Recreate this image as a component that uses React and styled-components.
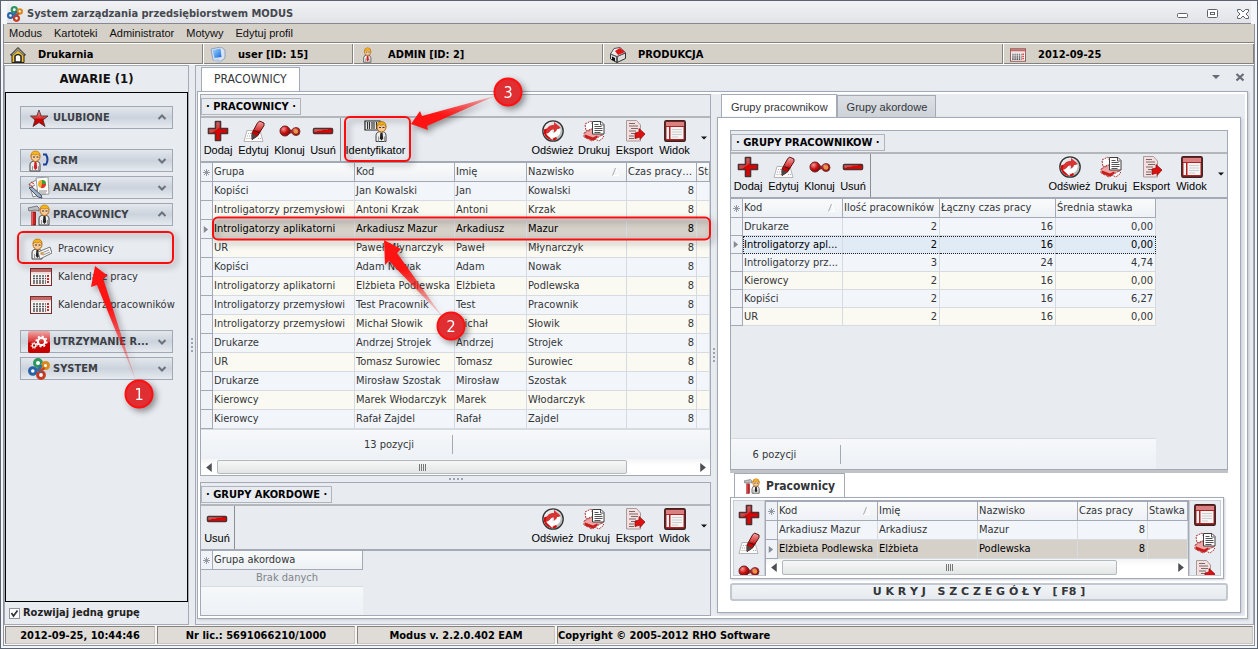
import React from 'react';
import styled, { createGlobalStyle, css } from 'styled-components';

const Colors = {
  frame: '#5c6472',
  line: '#a3aab6',
  soft: '#d6dae1',
  panel: '#e8ebf0',
  beige: '#d5d0c8',
  text: '#333539',
  white: '#ffffff',
};

const ui = `'DejaVu Sans Condensed', 'Open Sans', sans-serif`;
const sans = `'Liberation Sans', Arial, sans-serif`;

const GlobalStyle = createGlobalStyle`
  * {
    box-sizing: border-box;
  }

  body {
    margin: 0;
    background: ${Colors.panel};
    color: ${Colors.text};
    font: 11px/14px ${ui};
  }

  button {
    margin: 0;
    padding: 0;
    border: 0;
    background: none;
    color: inherit;
    font: inherit;
  }

  svg {
    display: block;
    flex: none;
  }
`;

const Window = styled.div`
  position: relative;
  display: flex;
  flex-direction: column;
  min-height: 100vh;
  border: 1px solid ${Colors.frame};
  background: #f4f6f9;
`;

const TitleBar = styled.header`
  display: flex;
  align-items: center;
  gap: 4px;
  height: 23px;
  margin: 0 6px;
  padding-top: 3px;
  border-bottom: 1px solid #85888f;
  background: linear-gradient(#f1f2f5, #e1e3e8);

  h1 {
    flex: 1;
    margin: 0;
    font-size: 11px;
    font-weight: bold;
    color: #45484d;
  }
`;

const WindowButton = styled.button`
  width: 16px;
  height: 16px;
  margin-left: 10px;
`;

const Frame = styled.div`
  flex: 1;
  display: flex;
  flex-direction: column;
  margin: 0 2px 2px;
  border: 1px solid #8b919c;
  border-top: 0;
`;

const MenuBar = styled.nav`
  display: flex;
  gap: 12px;
  height: 19px;
  padding: 2px 5px;
  border-bottom: 1px solid #85827d;
  background: ${Colors.beige};
  font-family: ${sans};

  a {
    color: #111;
    text-decoration: none;
  }
`;

const InfoBar = styled.div`
  display: flex;
  gap: 1px;
  padding: 1px 0;
  background: ${Colors.white};
`;

const InfoCell = styled.div`
  display: flex;
  align-items: center;
  flex: ${(p) => (p.$width ? 'none' : 1)};
  gap: 12px;
  width: ${(p) => p.$width}px;
  height: 20px;
  padding: 2px 0 0 6px;
  border: 1px solid #85827d;
  border-top: 0;
  border-left: 0;
  background: ${Colors.beige};
  color: #000;
  font-weight: bold;
`;

const Main = styled.main`
  flex: 1;
  display: flex;
`;

const Sidebar = styled.aside`
  flex: none;
  display: flex;
  flex-direction: column;
  width: 185px;
  border: 1px solid ${Colors.line};
  background: ${Colors.panel};
`;

const SidebarTitle = styled.h2`
  margin: 0;
  font-size: 13px;
  line-height: 26px;
  text-align: center;
  color: #111;
`;

const GroupList = styled.div`
  flex: 1;
  display: flex;
  flex-direction: column;
  gap: 4px;
  padding: 13px 14px;
  border: 1px solid #000;
`;

const GroupButton = styled.button`
  display: flex;
  align-items: center;
  gap: 3px;
  width: 100%;
  height: 23px;
  margin-bottom: ${(p) => (p.$spaced ? 16 : 0)}px;
  padding: 0 5px 0 7px;
  border: 1px solid #a0a8b4;
  background: linear-gradient(#e3e7ed, #ccd3dc 50%, #e6eaf0);
  color: #3c3f45;
  font-weight: bold;
  text-align: left;

  span {
    flex: 1;
  }
`;

const SubList = styled.div`
  display: flex;
  flex-direction: column;
  padding: 5px 0 7px 10px;
`;

const SubItem = styled.a`
  display: flex;
  align-items: center;
  gap: 6px;
  height: 28px;
  color: ${Colors.text};
  text-decoration: none;
  white-space: nowrap;
`;

const ExpandOption = styled.label`
  display: flex;
  align-items: center;
  gap: 3px;
  height: 22px;
  padding-left: 4px;
  color: #222;
  font-weight: bold;
`;

const CheckWrap = styled.span`
  display: grid;

  > * {
    grid-area: 1 / 1;
  }

  svg {
    pointer-events: none;
  }
`;

const Checkbox = styled.input`
  appearance: none;
  width: 11px;
  height: 11px;
  margin: 0;
  border: 1px solid #8f96a1;
  background: ${Colors.white};
`;

const Splitter = styled.div`
  flex: none;
  display: flex;
  flex-direction: ${(p) => (p.$vertical ? 'column' : 'row')};
  align-items: center;
  justify-content: center;
  gap: 2px;
  width: ${(p) => (p.$vertical ? '6px' : 'auto')};
  height: ${(p) => (p.$vertical ? 'auto' : '6px')};
  background: ${Colors.panel};

  i {
    width: 2px;
    height: 2px;
    background: #9da4b1;
  }
`;

const Workspace = styled.section`
  flex: 1;
  display: flex;
  flex-direction: column;
  min-width: 0;
  padding: 1px 5px 5px 1px;
  border: 1px solid ${Colors.line};
  background: ${Colors.panel};
`;

const DocTabs = styled.div`
  display: flex;
  align-items: flex-end;
  height: 24px;
  padding-left: 4px;
`;

const DocTab = styled.button`
  height: 25px;
  margin-bottom: -1px;
  padding: 0 12px 2px;
  border: 1px solid ${Colors.line};
  border-bottom: 0;
  background: ${Colors.white};
  font-size: 12px;
`;

const DocActions = styled.div`
  flex: 1;
  display: flex;
  align-self: center;
  justify-content: flex-end;
  gap: 14px;
  padding: 0 3px 5px 0;
`;

const Dock = styled.div`
  flex: 1;
  display: flex;
  padding: 2px;
  border: 1px solid ${Colors.line};
  background: ${Colors.panel};
  box-shadow: inset 0 0 0 2px ${Colors.white}, 1px 1px 2px #c3c8d1;
`;

const LeftColumn = styled.div`
  flex: none;
  display: flex;
  flex-direction: column;
  width: 511px;
`;

const RightColumn = styled.div`
  flex: 1;
  display: flex;
  flex-direction: column;
  min-width: 0;
  padding: 0 4px 3px 0;
`;

const Panel = styled.section`
  flex: ${(p) => (p.$grow ? 1 : 'none')};
  display: flex;
  flex-direction: column;
  border: 1px solid ${Colors.line};
  background: ${Colors.panel};
`;

const PanelHeader = styled.div`
  display: flex;
  align-items: flex-start;
  height: 23px;
  padding-top: 3px;
  border-bottom: 2px solid #b3b6bb;

  h3 {
    margin: 0;
    padding: 1px 4px 0;
    border: 1px solid #b0b4bb;
    color: #000;
    font-size: 11px;
    line-height: 14px;
  }
`;

const ToolbarBox = styled.div`
  display: flex;
  height: 45px;
  padding-right: 1px;
  border-bottom: 2px solid ${Colors.line};
`;

const ToolGroup = styled.div`
  display: flex;
  padding-right: ${(p) => (p.$first ? 1 : 0)}px;
  border-right: ${(p) => (p.$first ? '1px solid #8a8e96' : '0')};
  margin-left: ${(p) => (p.$end ? 'auto' : 0)};
`;

const ToolButton = styled.button`
  display: flex;
  flex-direction: column;
  align-items: center;
  gap: 1px;
  width: ${(p) => p.$width}px;
  padding-top: 2px;
  color: #000;
  font: 11px/14px ${sans};
  white-space: nowrap;
`;

const MoreButton = styled.button`
  width: 15px;
  padding: 0 2px 4px 7px;
`;

const Table = styled.table`
  flex: none;
  width: ${(p) => (p.$width ? `${p.$width}px` : '100%')};
  border-collapse: separate;
  border-spacing: 0;
  table-layout: fixed;

  th,
  td {
    overflow: hidden;
    padding: 0 2px 0 1px;
    white-space: nowrap;
    text-overflow: ellipsis;
  }

  th {
    height: 19px;
    padding-right: 0;
    border: solid ${Colors.line};
    border-width: 0 1px 1px 0;
    background: linear-gradient(#f9fafb, #eef1f5);
    font-weight: normal;
    text-align: left;
    text-overflow: clip;
  }

  td {
    height: ${(p) => p.$row}px;
    border: solid ${Colors.soft};
    border-width: 0 1px 1px 0;
  }

  td:first-child,
  th:first-child {
    padding: 0 1px;
    border-right: 1px solid ${Colors.line};
    background: #eff2f7;
  }

  td:first-child {
    border-bottom-color: ${Colors.line};
  }
`;

const Row = styled.tr`
  background: ${(p) => (p.$alt ? '#fbfaf2' : '#f2f5fa')};

  ${(p) =>
    p.$state === 'selected' &&
    css`
      background: ${Colors.beige};
      color: #000;
    `}

  ${(p) =>
    p.$state === 'focused' &&
    css`
      background: #e1ebf6;
      color: #000;

      && td:not(:first-child) {
        border-top: 1px dotted #222;
        border-bottom: 1px dotted #222;
      }

      && td:nth-child(2) {
        border-left: 1px dotted #222;
        padding-left: 0;
      }

      && td:last-child {
        border-right: 1px dotted #222;
      }
    `}
`;

const Cell = styled.td`
  text-align: ${(p) => (p.$number ? 'right' : 'left')};
`;

const HeadLabel = styled.span`
  display: flex;
  align-items: center;
  justify-content: space-between;
  padding-right: 7px;
`;

const GridFooter = styled.div`
  display: flex;
  align-items: center;
  flex: ${(p) => (p.$grow ? 1 : 'none')};
  width: ${(p) => (p.$width ? `${p.$width}px` : 'auto')};
  height: ${(p) => (p.$label ? 31 : 29)}px;
  border-top: 1px solid ${Colors.soft};
  background: linear-gradient(#f6f8fa, #edf1f5);

  span {
    width: ${(p) => p.$label}px;
    padding-right: ${(p) => p.$pad}px;
    border-right: 1px solid ${Colors.line};
    line-height: 19px;
    text-align: ${(p) => (p.$pad > 30 ? 'right' : 'center')};
  }
`;

const EmptyRow = styled.div`
  width: 162px;
  line-height: 16px;
  padding-left: 10px;
  color: #80848a;
  text-align: center;
`;

const Filler = styled.div`
  flex: 1;
`;

const ScrollTrack = styled.div`
  display: flex;
  height: ${(p) => p.$height}px;
  background: linear-gradient(#f3f4f5, #fff 40%);
`;

const ScrollArrow = styled.button`
  display: grid;
  place-items: center;
  width: 16px;
`;

const ScrollArea = styled.div`
  flex: 1;
  display: flex;
`;

const ScrollThumb = styled.div`
  display: flex;
  align-items: center;
  justify-content: center;
  gap: 1px;
  width: ${(p) => p.$size}%;
  margin: 1px 0;
  border: 1px solid #b3b8bd;
  border-radius: 2px;
  background: linear-gradient(#f6f7f7, #e3e6e6);

  i {
    width: 1px;
    height: 7px;
    background: #777;
  }
`;

const SideTabs = styled.div`
  display: flex;
  align-items: flex-end;
  height: 23px;
  padding-left: 4px;
`;

const SideTab = styled.button`
  height: ${(p) => (p.$active ? 24 : 22)}px;
  margin-bottom: ${(p) => (p.$active ? -1 : 0)}px;
  padding: 0 8px 0 9px;
  border: 1px solid ${Colors.line};
  border-bottom: 0;
  background: ${(p) =>
    p.$active ? Colors.white : 'linear-gradient(#dde1e6, #cdd2d8)'};
  font-family: ${sans};
`;

const TabPanel = styled.div`
  flex: 1;
  display: flex;
  flex-direction: column;
  padding: 12px 12px 11px;
  border: 1px solid ${Colors.line};
  background: ${Colors.white};
  box-shadow: 1px 1px 3px #c6cbd3;
`;

const DetailTabs = styled.div`
  display: flex;
  height: 27px;
  padding-left: 4px;
  border-top: 3px solid #c2c3c5;
`;

const DetailTab = styled.button`
  display: flex;
  align-items: center;
  gap: 6px;
  height: 25px;
  padding: 0 9px;
  border: 1px solid ${Colors.line};
  border-bottom: 0;
  background: ${Colors.white};
  font-size: 12px;
  font-weight: bold;
`;

const Detail = styled.div`
  display: flex;
  height: 82px;
  margin-right: 4px;
  padding: 2px;
  border: 1px solid ${Colors.line};
  box-shadow: 1px 1px 2px #cdd1d8;
`;

const IconStrip = styled.div`
  flex: none;
  display: flex;
  flex-direction: column;
  align-items: center;
  gap: 6px;
  width: 32px;
  padding-top: 3px;
  overflow: hidden;
  border: 1px solid #c9cdd5;
  background: ${Colors.panel};
`;

const DetailGrid = styled.div`
  flex: 1;
  min-width: 0;
  border: 1px solid ${Colors.line};
  border-top-width: 2px;
`;

const HideButton = styled.button`
  height: 18px;
  margin-top: 4px;
  border: 2px solid #c3c8d0;
  border-radius: 3px;
  background: linear-gradient(#f1f4f7, #e6eaee);
  font-family: 'DejaVu Sans', sans-serif;
  font-weight: bold;
  line-height: 14px;
  white-space: pre;
`;

const StatusBar = styled.footer`
  display: flex;
  gap: 2px;
  padding: 1px;
  background: #f7f6f4;
`;

const StatusCell = styled.div`
  flex: ${(p) => (p.$width ? 'none' : 1)};
  width: ${(p) => p.$width}px;
  height: 18px;
  padding-top: 2px;
  border: 1px solid #85827d;
  border-right-color: #c9c6c1;
  border-bottom-color: #c9c6c1;
  background: #dfdcd8;
  color: #000;
  font-weight: bold;
  text-align: ${(p) => (p.$width ? 'center' : 'left')};
`;

const Annotations = styled.svg`
  position: absolute;
  top: -1px;
  left: -1px;
  pointer-events: none;
  font: 16px ${ui};
`;

const Icon = ({ size = 22, box = 22, children }) => (
  <svg width={size} height={size} viewBox={`0 0 ${box} ${box}`} aria-hidden="true">
    {children}
  </svg>
);

const Gradients = () => (
  <svg width="0" height="0" style={{ position: 'absolute' }} aria-hidden="true">
    <defs>
      <linearGradient id="red" x1="0" y1="0" x2="0.7" y2="1">
        <stop offset="0" stopColor="#b99494" />
        <stop offset="0.48" stopColor="#d43a3a" />
        <stop offset="0.5" stopColor="#d90000" />
        <stop offset="1" stopColor="#e40808" />
      </linearGradient>
      <linearGradient id="redDown" x1="0" y1="0" x2="0" y2="1">
        <stop offset="0" stopColor="#efaaaa" />
        <stop offset="0.5" stopColor="#d83030" />
        <stop offset="0.55" stopColor="#c80000" />
        <stop offset="1" stopColor="#c60000" />
      </linearGradient>
      <radialGradient id="ball" cx="0.35" cy="0.3" r="0.8">
        <stop offset="0" stopColor="#f29a9a" />
        <stop offset="0.5" stopColor="#cf1212" />
        <stop offset="1" stopColor="#5d0808" />
      </radialGradient>
      <linearGradient id="silver" x1="0" y1="0" x2="1" y2="1">
        <stop offset="0" stopColor="#fff" />
        <stop offset="1" stopColor="#a9a9a9" />
      </linearGradient>
      <linearGradient id="screen" x1="0" y1="0" x2="1" y2="1">
        <stop offset="0" stopColor="#9fdcff" />
        <stop offset="1" stopColor="#1766df" />
      </linearGradient>
      <linearGradient id="tail1" x1="0" y1="0" x2="0.3" y2="1">
        <stop offset="0.45" stopColor="#ff1414" />
        <stop offset="1" stopColor="#ff1414" stopOpacity="0.25" />
      </linearGradient>
      <linearGradient id="tail3" x1="0" y1="1" x2="1" y2="0">
        <stop offset="0.4" stopColor="#ff1414" />
        <stop offset="1" stopColor="#ff1414" stopOpacity="0.25" />
      </linearGradient>
    </defs>
  </svg>
);

const PlusIcon = () => (
  <Icon>
    <path d="M8.500 1.500h5v7h7v5h-7v7h-5v-7h-7v-5h7z" fill="url(#red)" stroke="#4e3030" strokeWidth="1.600" strokeLinejoin="round" />
  </Icon>
);

const MinusIcon = () => (
  <Icon>
    <rect x="1.500" y="8.500" width="19" height="5" rx="1" fill="url(#red)" stroke="#4e3030" strokeWidth="1.500" />
  </Icon>
);

const PencilIcon = () => (
  <Icon>
    <path d="M4 10.500h13L20 21.500H1z" fill="#fdfdfd" stroke="#b5b5b5" />
    <path d="M5 13.500h5M4 16h5M3.500 18.500h5M15 18.500h3" stroke="#aaa" strokeDasharray="1 1" />
    <path d="M9 13l5.500-10 2-2L21 3v2.500L14.500 16 9 19.500z" fill="url(#redDown)" stroke="#5a1111" />
    <path d="M9 13.500l5.500 2.500L9 20z" fill="#484848" />
    <path d="M11.500 10.500l5 2.500" stroke="#222" />
  </Icon>
);

const CloneIcon = () => (
  <Icon>
    <path d="M9 9l5 1v3l-5 1z" fill="#a22020" />
    <circle cx="6" cy="11" r="5" fill="url(#ball)" stroke="#6d2020" />
    <circle cx="17" cy="11.500" r="4" fill="url(#ball)" stroke="#80393b" />
    <circle cx="17" cy="11.500" r="2.300" fill="#de9a45" />
  </Icon>
);

const RefreshIcon = () => (
  <Icon>
    <circle cx="11" cy="11" r="10.200" fill="url(#silver)" stroke="#333" strokeWidth="1.300" />
    <path d="M1.800 9.500a9.300 9.300 0 0 0 13.200 9.800l-1-2.800-4 3-6-6 2.500-2.500V8z" fill="#d10c0c" />
    <path d="M4 13.500c0-6 3-8.500 8-8.500V2l6.500 5.500L12 12.500V9.500c-3 0-4 1.500-4 4z" fill="#d93434" />
    <path d="M18.500 9c.5 6-3 8.500-8 8.500V20l-6-5.500 6-5V13c3 0 4.500-1.500 4.500-4z" fill="#fff" />
  </Icon>
);

const PrintIcon = () => (
  <Icon>
    <path d="M2 4l6-3 3 7-8 3z" fill="#fff" stroke="#a33" strokeDasharray="2 1" />
    <path d="M1 13l8-4 11 3v3l-11 6-8-4z" fill="#eda5a5" stroke="#b04545" strokeDasharray="3 1" />
    <path d="M2 14.500l8 3 4-2 1 2-5 3-8-3z" fill="#c71d1d" />
    <path d="M12 19l7-4 2 2-5 4z" fill="#fff" stroke="#b03434" strokeDasharray="2 1" />
    <path d="M9.500 1.500H18l3 3V14H9.500z" fill="#fff" stroke="#3e3e3e" />
    <path d="M11.500 4.500h4M11.500 6.500h7M11.500 8.500h8M11.500 10.500h8M11.500 12.500h6M17.500 2v3h3" stroke="#555" fill="none" />
  </Icon>
);

const ExportIcon = () => (
  <Icon>
    <path d="M2.500 0.500h10l4 4.500v16h-14z" fill="#f6dede" stroke="#a79c9c" />
    <path d="M5 3.500h6M5 6h9M7 8.500h7M5 11h7M7 13.500h6M5 16h5M5 18.500h5" stroke="#766a6a" />
    <path d="M11 13l4-1V8.500l6 5.500-5 5.500V17l-5 1.500z" fill="#de1010" stroke="#8d1818" strokeWidth="0.800" />
  </Icon>
);

const ViewIcon = () => (
  <Icon>
    <rect x="0.800" y="0.800" width="20.400" height="20.400" rx="1.500" fill="#b32222" stroke="#3b2020" strokeWidth="1.500" />
    <path d="M2 2h18v4H2z" fill="#d98080" />
    <path d="M2.500 7H5v12H2.500zM6.500 7h13v12h-13z" fill="#f5f5f5" />
    <path d="M8 9.500h10M8 12h10M8 14.500h10M8 17h6" stroke="#cdcdcd" />
  </Icon>
);

// Shared head and torso used by every worker icon.
const Figure = ({ x = 0, y = 0, apron }) => (
  <g transform={`translate(${x} ${y})`}>
    <path d="M1 20v-6q0-4 5-4t5 4v6z" fill="#ececec" stroke="#444" />
    <path d="M5.500 11h2l.7 6-1.700 2-1.700-2z" fill={apron || '#222'} />
    <path d="M3.500 20v-5M9.500 20v-5" stroke="#999" />
    <ellipse cx="6.500" cy="5.500" rx="4.500" ry="5" fill="#f7c995" stroke="#b46a12" />
    <path d="M2 5q0-5 4.500-5t4.500 5l-2-2-3 1-2-1z" fill="#f5b81b" stroke="#ba6d0c" strokeWidth="0.600" />
    <path d="M4 6h2M7.500 6h2" stroke="#333" />
  </g>
);

const BadgeIcon = () => (
  <svg width="24" height="22" viewBox="0 0 24 22" aria-hidden="true">
    <path d="M1 1h15v9H1z" fill="#fff" stroke="#222" strokeWidth="1.200" />
    <path d="M3.500 2v7M5.500 2v7M8 2v7M10 2v7M12.500 2v7" stroke="#333" strokeWidth="1.200" />
    <Figure x={11} y={1.500} />
  </svg>
);

const CrmIcon = () => (
  <Icon>
    <Figure x={1} y={1} apron="#c22" />
    <path d="M15 4.500h3q3 5 0 10h-3" fill="none" stroke="#1c3f98" strokeWidth="2" />
  </Icon>
);

const AnalysisIcon = () => (
  <Icon>
    <path d="M1 7l9-5 5 15-10 3z" fill="#f5f5f5" stroke="#888" />
    <path d="M8 1l12-1 1 17-11 1z" fill="#fff" stroke="#999" />
    <circle cx="14" cy="7" r="4" fill="#e9b12b" />
    <path d="M14 7V3a4 4 0 0 1 4 4z" fill="#3f9e3c" />
    <path d="M14 7h4a4 4 0 0 1-5 4z" fill="#d33" />
    <path d="M11 14h8M11 16h7M3 10l4-2M5 14l4-1" stroke="#888" />
    <path d="M1 11l9 9 4 1-1-3-9-8z" fill="#9fb0c8" stroke="#456" />
    <path d="M1 7l4 3M3 5l3 2" stroke="#c33" />
  </Icon>
);

const WorkersIcon = ({ size }) => (
  <Icon size={size}>
    <path d="M0 4l9-2 2 2v3L7 6 1 7z" fill="#bcc1c7" stroke="#666" strokeWidth="0.800" />
    <rect x="3.500" y="8" width="4" height="13" fill="#d12020" stroke="#771111" strokeWidth="0.800" />
    <path d="M4 7v14" stroke="#f39a9a" />
    <Figure x={10} y={1} />
  </Icon>
);

const WorkerDocIcon = () => (
  <Icon>
    <Figure x={1} y={1} />
    <path d="M8 14l12-5 2 6-12 6z" fill="#f6f6f6" stroke="#777" />
    <path d="M13 14.500l6-2.500M13 17l7-3" stroke="#999" />
    <circle cx="12" cy="15.500" r="1.700" fill="#d5a25c" />
  </Icon>
);

const CalendarIcon = ({ size }) => (
  <Icon size={size}>
    <rect x="0.500" y="2.500" width="21" height="17" fill="#f4f4f4" stroke="#7c2b2b" />
    <path d="M1 3h20v3H1z" fill="#c26a6a" />
    <path d="M1 7h20" stroke="#e9caca" />
    <path d="M3 10h13M3 12.500h13M3 15h13M3 17h13" stroke="#555" strokeDasharray="2 1" strokeWidth="1.500" />
    <path d="M18 9v9" stroke="#d22" strokeWidth="2" strokeDasharray="2 1" />
  </Icon>
);

const StarIcon = () => (
  <Icon>
    <path d="M11 3l2.200 6H20l-5 4 2 6.500-6-4-6 4L7 13 2.500 9h6.300z" fill="url(#redDown)" stroke="#5a3030" strokeWidth="0.900" />
  </Icon>
);

const GearIcon = () => (
  <Icon>
    <rect width="22" height="22" rx="2" fill="url(#redDown)" />
    <circle cx="13.500" cy="10.500" r="3.600" fill="none" stroke="#fff" strokeWidth="2.200" />
    <circle cx="13.500" cy="10.500" r="5.300" fill="none" stroke="#fff" strokeWidth="1.500" strokeDasharray="2 2.100" />
    <circle cx="6" cy="14.500" r="1.800" fill="none" stroke="#fff" strokeWidth="1.300" />
    <circle cx="6" cy="14.500" r="2.900" fill="none" stroke="#fff" strokeDasharray="1.300 1.300" />
  </Icon>
);

const LogoIcon = ({ size }) => (
  <Icon size={size}>
    <g fill="#fff" strokeWidth="3">
      <circle cx="4.800" cy="13" r="3.300" stroke="#2a62a8" />
      <circle cx="10" cy="5" r="3.500" stroke="#2c9560" />
      <circle cx="17.500" cy="7.500" r="3" stroke="#d98a1b" />
      <circle cx="13" cy="17" r="3.400" stroke="#c63b22" />
    </g>
    <path d="M8 12q4 0 5-5M9 11l5 3" stroke="#2f6fa5" strokeWidth="3" fill="none" />
    <path d="M11.500 13l5-3" stroke="#c5441f" strokeWidth="2.500" />
  </Icon>
);

const HomeIcon = () => (
  <Icon size={16} box={16}>
    <path d="M8 0.500L15.500 8H14v7.500H2V8H0.500z" fill="#f0c22c" stroke="#222" />
    <path d="M8 1l7 7h-2L8 3.500 3 8H1z" fill="#999" stroke="#333" strokeWidth="0.500" />
    <path d="M5 15V9q3-3 6 0v6z" fill="#fff" stroke="#222" strokeWidth="1.500" />
  </Icon>
);

const ComputerIcon = () => (
  <Icon size={16} box={16}>
    <path d="M1 2l10-2 4 3v8l-5 4-7-2z" fill="#d9e2ef" stroke="#90a2bb" />
    <path d="M2.500 3l8-1.500 1 8.500-7 1z" fill="url(#screen)" />
    <path d="M3 13l5-1 4 2-5 2z" fill="#b9c8dc" />
  </Icon>
);

const PersonIcon = () => (
  <Icon size={16} box={22}>
    <Figure x={4} y={1} apron="#c22" />
  </Icon>
);

const PlantIcon = () => (
  <Icon size={16} box={16}>
    <path d="M0.500 7L7 9.500v6L0.500 12zM7 9.500L15.500 6v5.500L7 15.500z" fill="#ddd" stroke="#333" />
    <path d="M0.500 7L4 1.500 10 .5l5.500 5L7 9.500z" fill="#eee" stroke="#555" />
    <path d="M5 4l5-3 5 4-7 3z" fill="#e01515" />
    <path d="M2 9.500l3 1.500v3.500L2 13z" fill="#111" />
  </Icon>
);

const Chevron = ({ up }) => (
  <Icon size={10} box={10}>
    <path d={up ? 'M1.500 6L5 2.500 8.500 6' : 'M1.500 3L5 6.500 8.500 3'} fill="none" stroke="#6b727e" strokeWidth="2" />
  </Icon>
);

const Triangle = ({ dir, size = 7, color = '#4b4e53' }) => {
  const points = {
    left: '6,0 6,8 1,4',
    right: '2,0 2,8 7,4',
    down: '0,2 8,2 4,6',
  };
  return (
    <svg width={size} height={size} viewBox="0 0 8 8" aria-hidden="true">
      <polygon points={points[dir]} fill={color} />
    </svg>
  );
};

const Asterisk = () => (
  <svg width="9" height="9" viewBox="0 0 9 9" aria-hidden="true">
    <path d="M4.500 1v7M1 4.500h7M2 2l5 5M7 2L2 7" stroke="#8a919c" strokeWidth="0.900" />
  </svg>
);

const SortMark = () => (
  <svg width="7" height="8" viewBox="0 0 7 8" aria-hidden="true">
    <path d="M3.500 0l3 7.500h-6" stroke="#fff" fill="none" />
    <path d="M3.500 0L0.500 7.500" stroke="#a7a9ad" fill="none" />
  </svg>
);

const Dots = ({ vertical }) => (
  <Splitter $vertical={vertical}>
    <i />
    <i />
    <i />
    <i />
  </Splitter>
);

const editTools = [
  { label: 'Dodaj', icon: <PlusIcon />, width: 34 },
  { label: 'Edytuj', icon: <PencilIcon />, width: 37 },
  { label: 'Klonuj', icon: <CloneIcon />, width: 35 },
  { label: 'Usuń', icon: <MinusIcon />, width: 32 },
];

const viewTools = [
  { label: 'Odśwież', icon: <RefreshIcon />, width: 43 },
  { label: 'Drukuj', icon: <PrintIcon />, width: 40 },
  { label: 'Eksport', icon: <ExportIcon />, width: 41 },
  { label: 'Widok', icon: <ViewIcon />, width: 39 },
];

const Tool = ({ label, icon, width }) => (
  <ToolButton $width={width}>
    {icon}
    {label}
  </ToolButton>
);

const Toolbar = ({ tools, extra }) => (
  <ToolbarBox>
    <ToolGroup $first>
      {tools.map((tool) => (
        <Tool key={tool.label} {...tool} />
      ))}
    </ToolGroup>
    {extra && (
      <ToolGroup>
        <Tool {...extra} />
      </ToolGroup>
    )}
    <ToolGroup $end>
      {viewTools.map((tool) => (
        <Tool key={tool.label} {...tool} />
      ))}
      <MoreButton aria-label="Więcej">
        <Triangle dir="down" size={6} color="#111" />
      </MoreButton>
    </ToolGroup>
  </ToolbarBox>
);

const Grid = ({ columns, rows, row, width }) => (
  <Table $row={row} $width={width}>
    <colgroup>
      <col width="12" />
      {columns.map((column) => (
        <col key={column.label} width={column.width} />
      ))}
    </colgroup>
    <thead>
      <tr>
        <th>
          <Asterisk />
        </th>
        {columns.map((column) => (
          <th key={column.label}>
            {column.sorted ? (
              <HeadLabel>
                {column.label}
                <SortMark />
              </HeadLabel>
            ) : (
              column.label
            )}
          </th>
        ))}
      </tr>
    </thead>
    <tbody>
      {rows.map(({ cells, state }, index) => (
        <Row key={index} $alt={index % 2 === 1} $state={state}>
          <td>{state && <Triangle dir="right" color="#858b96" />}</td>
          {columns.map((column, i) => (
            <Cell key={column.label} $number={column.number}>
              {cells[i]}
            </Cell>
          ))}
        </Row>
      ))}
    </tbody>
  </Table>
);

const ScrollBar = ({ size, height }) => (
  <ScrollTrack $height={height}>
    <ScrollArrow aria-label="W lewo">
      <Triangle dir="left" size={9} />
    </ScrollArrow>
    <ScrollArea>
      <ScrollThumb $size={size}>
        <i />
        <i />
        <i />
        <i />
      </ScrollThumb>
    </ScrollArea>
    <ScrollArrow aria-label="W prawo">
      <Triangle dir="right" size={9} />
    </ScrollArrow>
  </ScrollTrack>
);

const workerColumns = [
  { label: 'Grupa', width: 142 },
  { label: 'Kod', width: 100 },
  { label: 'Imię', width: 72 },
  { label: 'Nazwisko', width: 100, sorted: true },
  { label: 'Czas pracy…', width: 70, number: true },
  { label: 'Sta' },
];

const workers = [
  ['Kopiści', 'Jan', 'Kowalski'],
  ['Introligatorzy przemysłowi', 'Antoni', 'Krzak'],
  ['Introligatorzy aplikatorni', 'Arkadiusz', 'Mazur', 'selected'],
  ['UR', 'Paweł', 'Młynarczyk'],
  ['Kopiści', 'Adam', 'Nowak'],
  ['Introligatorzy aplikatorni', 'Elżbieta', 'Podlewska'],
  ['Introligatorzy przemysłowi', 'Test', 'Pracownik'],
  ['Introligatorzy przemysłowi', 'Michał', 'Słowik'],
  ['Drukarze', 'Andrzej', 'Strojek'],
  ['UR', 'Tomasz', 'Surowiec'],
  ['Drukarze', 'Mirosław', 'Szostak'],
  ['Kierowcy', 'Marek', 'Włodarczyk'],
  ['Kierowcy', 'Rafał', 'Zajdel'],
].map(([group, first, last, state]) => ({
  cells: [group, `${first} ${last}`, first, last, 8],
  state,
}));

const groupColumns = [
  { label: 'Kod', width: 100, sorted: true },
  { label: 'Ilość pracowników', width: 97, number: true },
  { label: 'Łączny czas pracy', width: 116, number: true },
  { label: 'Średnia stawka', width: 100, number: true },
];

const groups = [
  { cells: ['Drukarze', 2, 16, '0,00'] },
  { cells: ['Introligatorzy apl...', 2, 16, '0,00'], state: 'focused' },
  { cells: ['Introligatorzy prz...', 3, 24, '4,74'] },
  { cells: ['Kierowcy', 2, 16, '0,00'] },
  { cells: ['Kopiści', 2, 16, '6,27'] },
  { cells: ['UR', 2, 16, '0,00'] },
];

const detailColumns = [
  { label: 'Kod', width: 100, sorted: true },
  { label: 'Imię', width: 100 },
  { label: 'Nazwisko', width: 100 },
  { label: 'Czas pracy', width: 70, number: true },
  { label: 'Stawka' },
];

const details = [
  { cells: ['Arkadiusz Mazur', 'Arkadiusz', 'Mazur', 8] },
  { cells: ['Elżbieta Podlewska', 'Elżbieta', 'Podlewska', 8], state: 'selected' },
];

const Group = ({ icon, label, open, spaced }) => (
  <GroupButton $spaced={spaced}>
    {icon}
    <span>{label}</span>
    <Chevron up={open} />
  </GroupButton>
);

const Callout = ({ x, y, n }) => (
  <g>
    <circle cx={x} cy={y} r="13.500" fill="#e02f33" stroke="#ff1010" strokeWidth="2" />
    <text x={x} y={y + 6} fill="#fff" textAnchor="middle">
      {n}
    </text>
  </g>
);

const Overlay = () => (
  <Annotations width="720" height="420" viewBox="0 0 720 420">
    <g style={{ filter: 'drop-shadow(3px 3px 3px rgba(0, 0, 0, 0.4))' }}>
      <g fill="none" stroke="#fb0d0d" strokeWidth="2">
        <rect x="18" y="232" width="155" height="31" rx="5" />
        <rect x="345" y="117" width="65" height="44" rx="5" />
        <rect x="213" y="217.500" width="497" height="22" rx="5" />
      </g>
      <path d="M95 266l13 10-5 2 33 103-39-96-6 2z" fill="url(#tail1)" />
      <path d="M384 240l17 9-4 4 45 63-53-55-4 4z" fill="url(#tail1)" />
      <path d="M411 124l9-13 2 5 73-20-68 30 1 4z" fill="url(#tail3)" />
      <Callout x={139} y={394} n={1} />
      <Callout x={451} y={326} n={2} />
      <Callout x={508} y={92} n={3} />
    </g>
  </Annotations>
);

const App = () => (
  <Window>
    <GlobalStyle />
    <Gradients />
    <TitleBar>
      <LogoIcon size={16} />
      <h1>System zarządzania przedsiębiorstwem MODUS</h1>
      <WindowButton aria-label="Minimalizuj">
        <Icon size={16} box={16}>
          <rect x="2.500" y="7.500" width="10" height="4" rx="1" fill="#fff" stroke="#5f636b" />
        </Icon>
      </WindowButton>
      <WindowButton aria-label="Maksymalizuj">
        <Icon size={16} box={16}>
          <rect x="2.500" y="3.500" width="10" height="8" rx="1" fill="#fff" stroke="#5f636b" />
          <rect x="5.500" y="6.500" width="4" height="2" fill="#fff" stroke="#5f636b" />
        </Icon>
      </WindowButton>
      <WindowButton aria-label="Zamknij">
        <Icon size={16} box={16}>
          <path d="M2.500 3.500h3l2.500 2.500 2.500-2.500h3v2L11 8l2.500 2.500v2h-3L8 10l-2.500 2.500h-3v-2L5 8 2.500 5.500z" fill="#fff" stroke="#5f636b" />
        </Icon>
      </WindowButton>
    </TitleBar>
    <Frame>
      <MenuBar>
        <a href="#modus">Modus</a>
        <a href="#kartoteki">Kartoteki</a>
        <a href="#administrator">Administrator</a>
        <a href="#motywy">Motywy</a>
        <a href="#profil">Edytuj profil</a>
      </MenuBar>
      <InfoBar>
        <InfoCell $width={199}>
          <HomeIcon />
          Drukarnia
        </InfoCell>
        <InfoCell $width={149}>
          <ComputerIcon />
          user [ID: 15]
        </InfoCell>
        <InfoCell $width={249}>
          <PersonIcon />
          ADMIN [ID: 2]
        </InfoCell>
        <InfoCell $width={399}>
          <PlantIcon />
          PRODUKCJA
        </InfoCell>
        <InfoCell>
          <CalendarIcon size={16} />
          2012-09-25
        </InfoCell>
      </InfoBar>
      <Main>
        <Sidebar>
          <SidebarTitle>AWARIE (1)</SidebarTitle>
          <GroupList>
            <Group label="ULUBIONE" icon={<StarIcon />} open spaced />
            <Group label="CRM" icon={<CrmIcon />} />
            <Group label="ANALIZY" icon={<AnalysisIcon />} />
            <Group label="PRACOWNICY" icon={<WorkersIcon />} open />
            <SubList>
              <SubItem href="#pracownicy">
                <WorkerDocIcon />
                Pracownicy
              </SubItem>
              <SubItem href="#kalendarz-pracy">
                <CalendarIcon />
                Kalendarz pracy
              </SubItem>
              <SubItem href="#kalendarz-pracownikow">
                <CalendarIcon />
                Kalendarz pracowników
              </SubItem>
            </SubList>
            <Group label="UTRZYMANIE R..." icon={<GearIcon />} />
            <Group label="SYSTEM" icon={<LogoIcon />} />
          </GroupList>
          <ExpandOption>
            <CheckWrap>
              <Checkbox type="checkbox" defaultChecked />
              <Icon size={11} box={11}>
                <path d="M2.500 5l2 3 4-5.500" fill="none" stroke="#333" strokeWidth="1.700" />
              </Icon>
            </CheckWrap>
            Rozwijaj jedną grupę
          </ExpandOption>
        </Sidebar>
        <Dots vertical />
        <Workspace>
          <DocTabs>
            <DocTab>PRACOWNICY</DocTab>
            <DocActions>
              <button aria-label="Lista kart">
                <Icon size={10} box={10}>
                  <path d="M1 3h8L5 7z" fill="#666b74" />
                </Icon>
              </button>
              <button aria-label="Zamknij kartę">
                <Icon size={10} box={10}>
                  <path d="M1.500 2l7 6.500M8.500 2l-7 6.500" stroke="#666b74" strokeWidth="2.200" />
                </Icon>
              </button>
            </DocActions>
          </DocTabs>
          <Dock>
            <LeftColumn>
              <Panel $grow>
                <PanelHeader>
                  <h3>· PRACOWNICY ·</h3>
                </PanelHeader>
                <Toolbar
                  tools={editTools}
                  extra={{ label: 'Identyfikator', icon: <BadgeIcon />, width: 69 }}
                />
                <Grid columns={workerColumns} rows={workers} row={19} />
                <GridFooter $grow $label={252} $pad={38}>
                  <span>13 pozycji</span>
                </GridFooter>
                <ScrollBar size={86} height={16} />
              </Panel>
              <Dots />
              <Panel>
                <PanelHeader>
                  <h3>· GRUPY AKORDOWE ·</h3>
                </PanelHeader>
                <Toolbar tools={[editTools[3]]} />
                <Grid columns={[{ label: 'Grupa akordowa', width: 150 }]} rows={[]} row={19} width={162} />
                <EmptyRow>Brak danych</EmptyRow>
                <GridFooter $width={162} />
              </Panel>
            </LeftColumn>
            <Dots vertical />
            <RightColumn>
              <SideTabs>
                <SideTab $active>Grupy pracownikow</SideTab>
                <SideTab>Grupy akordowe</SideTab>
              </SideTabs>
              <TabPanel>
                <Panel $grow>
                  <PanelHeader>
                    <h3>· GRUPY PRACOWNIKOW ·</h3>
                  </PanelHeader>
                  <Toolbar tools={editTools} />
                  <Grid columns={groupColumns} rows={groups} row={18} width={425} />
                  <Filler />
                  <GridFooter $width={425} $label={110} $pad={22}>
                    <span>6 pozycji</span>
                  </GridFooter>
                </Panel>
                <DetailTabs>
                  <DetailTab>
                    <WorkersIcon size={16} />
                    Pracownicy
                  </DetailTab>
                </DetailTabs>
                <Detail>
                  <IconStrip>
                    <PlusIcon />
                    <PencilIcon />
                    <CloneIcon />
                  </IconStrip>
                  <DetailGrid>
                    <Grid columns={detailColumns} rows={details} row={19} />
                    <ScrollBar size={86} height={17} />
                  </DetailGrid>
                  <IconStrip>
                    <ViewIcon />
                    <PrintIcon />
                    <ExportIcon />
                  </IconStrip>
                </Detail>
                <HideButton>U K R Y J   S Z C Z E G Ó Ł Y   [ F8 ]</HideButton>
              </TabPanel>
            </RightColumn>
          </Dock>
        </Workspace>
      </Main>
      <StatusBar>
        <StatusCell $width={150}>2012-09-25, 10:44:46</StatusCell>
        <StatusCell $width={198}>Nr lic.: 5691066210/1000</StatusCell>
        <StatusCell $width={198}>Modus v. 2.2.0.402 EAM</StatusCell>
        <StatusCell>Copyright © 2005-2012 RHO Software</StatusCell>
      </StatusBar>
    </Frame>
    <Overlay />
  </Window>
);

export default App;
